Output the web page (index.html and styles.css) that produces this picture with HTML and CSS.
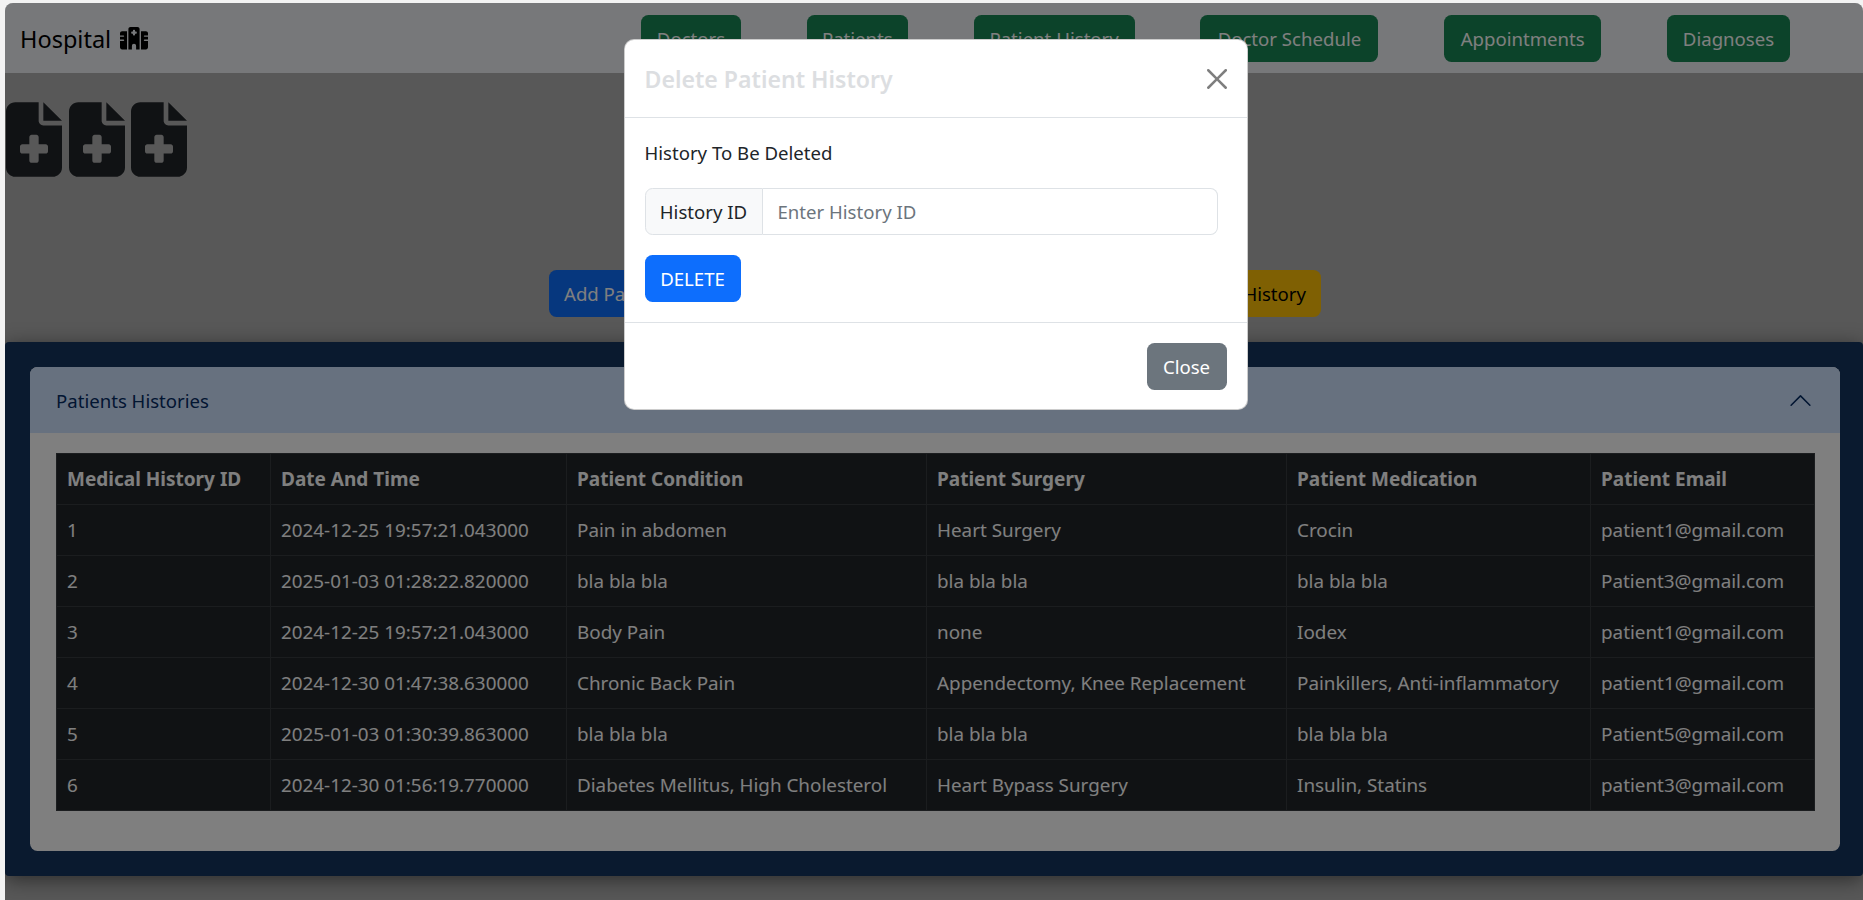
FILE: index.html
```html
<!DOCTYPE html>
<html>
<head>
  <link rel="stylesheet" href="styles.css">
</head>
<body>
  <div class="app">
    <nav class="topbar">
      <a class="brand">Hospital
        <svg class="brand-icon" viewBox="0 0 640 512"><path d="M192 48c0-26.5 21.5-48 48-48H400c26.5 0 48 21.5 48 48V512H368V432c0-26.5-21.5-48-48-48s-48 21.5-48 48v80H192V48zM48 96H160V512H48c-26.5 0-48-21.5-48-48V320H80c8.8 0 16-7.2 16-16s-7.2-16-16-16H0V224H80c8.8 0 16-7.2 16-16s-7.2-16-16-16H0V144c0-26.5 21.5-48 48-48zm544 0c26.5 0 48 21.5 48 48v48H560c-8.8 0-16 7.2-16 16s7.2 16 16 16h80v64H560c-8.8 0-16 7.2-16 16s7.2 16 16 16h80V464c0 26.5-21.5 48-48 48H480V96H592zM312 64c-8.8 0-16 7.2-16 16v24H272c-8.8 0-16 7.2-16 16v16c0 8.8 7.2 16 16 16h24v24c0 8.8 7.2 16 16 16h16c8.8 0 16-7.2 16-16V152h24c8.8 0 16-7.2 16-16V120c0-8.8-7.2-16-16-16H344V80c0-8.8-7.2-16-16-16H312z"/></svg>
      </a>
      <div class="nav-links">
        <button class="btn btn-green btn-doctors">Doctors</button>
        <button class="btn btn-green btn-patients">Patients</button>
        <button class="btn btn-green btn-history">Patient History</button>
        <button class="btn btn-green btn-schedule">Doctor Schedule</button>
        <button class="btn btn-green btn-appointments">Appointments</button>
        <button class="btn btn-green btn-diagnoses">Diagnoses</button>
      </div>
    </nav>

    <div class="file-icons">
      <svg class="file-icon" viewBox="0 0 384 512"><path d="M64 0C28.7 0 0 28.7 0 64V448c0 35.3 28.7 64 64 64H320c35.3 0 64-28.7 64-64V160H256c-17.7 0-32-14.3-32-32V0H64zM256 0V128H384L256 0zM160 240c0-8.8 7.2-16 16-16h32c8.8 0 16 7.2 16 16v48h48c8.8 0 16 7.2 16 16v32c0 8.8-7.2 16-16 16H224v48c0 8.8-7.2 16-16 16H176c-8.8 0-16-7.2-16-16V352H112c-8.8 0-16-7.2-16-16V304c0-8.8 7.2-16 16-16h48V240z"/></svg>
      <svg class="file-icon" viewBox="0 0 384 512"><path d="M64 0C28.7 0 0 28.7 0 64V448c0 35.3 28.7 64 64 64H320c35.3 0 64-28.7 64-64V160H256c-17.7 0-32-14.3-32-32V0H64zM256 0V128H384L256 0zM160 240c0-8.8 7.2-16 16-16h32c8.8 0 16 7.2 16 16v48h48c8.8 0 16 7.2 16 16v32c0 8.8-7.2 16-16 16H224v48c0 8.8-7.2 16-16 16H176c-8.8 0-16-7.2-16-16V352H112c-8.8 0-16-7.2-16-16V304c0-8.8 7.2-16 16-16h48V240z"/></svg>
      <svg class="file-icon" viewBox="0 0 384 512"><path d="M64 0C28.7 0 0 28.7 0 64V448c0 35.3 28.7 64 64 64H320c35.3 0 64-28.7 64-64V160H256c-17.7 0-32-14.3-32-32V0H64zM256 0V128H384L256 0zM160 240c0-8.8 7.2-16 16-16h32c8.8 0 16 7.2 16 16v48h48c8.8 0 16 7.2 16 16v32c0 8.8-7.2 16-16 16H224v48c0 8.8-7.2 16-16 16H176c-8.8 0-16-7.2-16-16V352H112c-8.8 0-16-7.2-16-16V304c0-8.8 7.2-16 16-16h48V240z"/></svg>
    </div>

    <div class="actions">
      <button class="btn btn-blue">Add Patient History</button>
      <button class="btn btn-yellow">Delete Patient History</button>
    </div>

    <section class="panel">
      <div class="accordion">
        <div class="accordion-head">
          <span class="accordion-title">Patients Histories</span>
          <svg class="chevron" viewBox="0 0 16 16"><path d="M1.646 4.646a.5.5 0 0 1 .708 0L8 10.293l5.646-5.647a.5.5 0 0 1 .708.708l-6 6a.5.5 0 0 1-.708 0l-6-6a.5.5 0 0 1 0-.708z"/></svg>
        </div>
        <div class="accordion-body">
          <table class="history-table">
            <thead>
              <tr>
                <th>Medical History ID</th>
                <th>Date And Time</th>
                <th>Patient Condition</th>
                <th>Patient Surgery</th>
                <th>Patient Medication</th>
                <th>Patient Email</th>
              </tr>
            </thead>
            <tbody>
              <tr><td>1</td><td>2024-12-25 19:57:21.043000</td><td>Pain in abdomen</td><td>Heart Surgery</td><td>Crocin</td><td>patient1@gmail.com</td></tr>
              <tr><td>2</td><td>2025-01-03 01:28:22.820000</td><td>bla bla bla</td><td>bla bla bla</td><td>bla bla bla</td><td>Patient3@gmail.com</td></tr>
              <tr><td>3</td><td>2024-12-25 19:57:21.043000</td><td>Body Pain</td><td>none</td><td>Iodex</td><td>patient1@gmail.com</td></tr>
              <tr><td>4</td><td>2024-12-30 01:47:38.630000</td><td>Chronic Back Pain</td><td>Appendectomy, Knee Replacement</td><td>Painkillers, Anti-inflammatory</td><td>patient1@gmail.com</td></tr>
              <tr><td>5</td><td>2025-01-03 01:30:39.863000</td><td>bla bla bla</td><td>bla bla bla</td><td>bla bla bla</td><td>Patient5@gmail.com</td></tr>
              <tr><td>6</td><td>2024-12-30 01:56:19.770000</td><td>Diabetes Mellitus, High Cholesterol</td><td>Heart Bypass Surgery</td><td>Insulin, Statins</td><td>patient3@gmail.com</td></tr>
            </tbody>
          </table>
        </div>
      </div>
    </section>

    <div class="backdrop">
      <div class="modal">
        <div class="modal-head">
          <h5 class="modal-title">Delete Patient History</h5>
          <svg class="modal-close" viewBox="0 0 16 16"><path d="M.293.293a1 1 0 0 1 1.414 0L8 6.586 14.293.293a1 1 0 1 1 1.414 1.414L9.414 8l6.293 6.293a1 1 0 0 1-1.414 1.414L8 9.414l-6.293 6.293a1 1 0 0 1-1.414-1.414L6.586 8 .293 1.707a1 1 0 0 1 0-1.414z"/></svg>
        </div>
        <div class="modal-body">
          <p class="modal-label">History To Be Deleted</p>
          <div class="input-group">
            <span class="input-addon">History ID</span>
            <input class="input-field" type="text" placeholder="Enter History ID">
          </div>
          <button class="btn btn-blue btn-delete">DELETE</button>
        </div>
        <div class="modal-foot">
          <button class="btn btn-grey">Close</button>
        </div>
      </div>
    </div>
  </div>
</body>
</html>
```

FILE: styles.css
```css
/* page */
* {
  box-sizing: border-box;
}

body {
  margin: 0;
  padding: 3px 0 0 5px;
  height: 900px;
  overflow: hidden;
  background-color: #f3f3f3;
  font-family: "Noto Sans", "Open Sans", sans-serif;
  font-size: 18.6px;
  line-height: 30px;
  color: #212529;
}

.app {
  position: relative;
  height: 897px;
  overflow: hidden;
  border-radius: 8px 8px 0 0;
  background-color: #b0b0b0;
}

/* buttons */
.btn {
  height: 47px;
  padding: 0;
  border: none;
  border-radius: 7.5px;
  font-family: inherit;
  font-size: 18.6px;
  line-height: 30px;
  color: #fff;
  text-align: center;
}

.btn-green {
  padding-top: 2px;
  background-color: #198754;
}

.btn-blue {
  background-color: #0d6efd;
}

.btn-yellow {
  background-color: #ffc107;
  color: #000;
}

.btn-grey {
  width: 80px;
  background-color: #6c757d;
}

/* top bar */
.topbar {
  display: flex;
  align-items: center;
  height: 70px;
  padding: 0 73px 0 15px;
  background-color: #eef0f4;
}

.brand {
  display: flex;
  align-items: center;
  gap: 9px;
  padding-top: 1px;
  font-size: 23.5px;
  color: #000;
}

.brand-icon {
  width: 28px;
  height: 22.4px;
}

.nav-links {
  display: flex;
  gap: 65.8px;
  margin-left: auto;
}

.btn-doctors { width: 100px; }
.btn-patients { width: 101px; }
.btn-history { width: 161px; }
.btn-schedule { width: 178px; }
.btn-appointments { width: 157px; }
.btn-diagnoses { width: 123px; }

/* big icons */
.file-icons {
  display: flex;
  gap: 6.5px;
  height: 75px;
  margin: 29px 0 0 1px;
}

.file-icon {
  width: 56px;
  height: 75px;
  fill: #212529;
}

/* buttons under the icons */
.actions {
  display: flex;
  justify-content: space-between;
  width: 772px;
  margin: 93px 0 0 544px;
}

.actions .btn {
  padding: 0 15px;
}

/* blue panel */
.panel {
  margin-top: 25px;
  padding: 25px 23px 25px 25px;
  border-radius: 4px;
  background-color: #14345f;
  box-shadow: 0 4px 20px rgba(0, 0, 0, 0.5);
}

.accordion {
  border-radius: 7.5px;
  overflow: hidden;
  background-color: #fff;
}

.accordion-head {
  display: flex;
  justify-content: space-between;
  align-items: center;
  height: 66px;
  padding: 0 27px 0 26px;
  background-color: #cfe2ff;
  color: #052c65;
}

.accordion-title {
  padding-top: 2px;
}

.chevron {
  width: 25px;
  height: 25px;
  fill: #052c65;
  transform: rotate(180deg);
}

.accordion-body {
  padding: 20px 25px 40px 26px;
}

/* table */
.history-table {
  width: 100%;
  table-layout: fixed;
  border-collapse: collapse;
  background-color: #212529;
  color: #fff;
  font-size: 18.85px;
}

.history-table th,
.history-table td {
  padding: 10px;
  border: 1px solid #373b3e;
  text-align: left;
  white-space: nowrap;
  overflow: hidden;
}

.history-table th {
  font-weight: 700;
  font-size: 19px;
}

.history-table th:nth-child(1) { width: 214px; }
.history-table th:nth-child(2) { width: 296px; }
.history-table th:nth-child(3) { width: 360px; }
.history-table th:nth-child(4) { width: 360px; }
.history-table th:nth-child(5) { width: 304px; }
.history-table th:nth-child(6) { width: 224px; }

/* modal */
.backdrop {
  position: absolute;
  top: 0;
  left: 0;
  width: 100%;
  height: 100%;
  display: flex;
  justify-content: center;
  align-items: flex-start;
  padding: 36px 0 0 3px;
  background-color: rgba(0, 0, 0, 0.5);
}

.modal {
  width: 624px;
  border: 1px solid rgba(0, 0, 0, 0.2);
  border-radius: 10px;
  background-color: #fff;
}

.modal-head {
  display: flex;
  justify-content: space-between;
  align-items: center;
  height: 78px;
  padding: 0 20px;
  border-bottom: 1px solid #dee2e6;
}

.modal-title {
  margin: 0;
  font-size: 23.1px;
  font-weight: 600;
  line-height: 30px;
  color: #dcdee1;
}

.modal-close {
  width: 20px;
  height: 20px;
  fill: #000;
  opacity: 0.5;
}

.modal-body {
  padding: 20px;
}

.modal-label {
  margin: 0 0 20px;
}

.input-group {
  display: flex;
  width: 573px;
  height: 47px;
  margin-bottom: 20px;
}

.input-addon {
  width: 118px;
  border: 1px solid #dee2e6;
  border-radius: 7.5px 0 0 7.5px;
  background-color: #f8f9fa;
  line-height: 45px;
  text-align: center;
}

.input-field {
  flex: 1;
  padding: 0 15px;
  border: 1px solid #dee2e6;
  border-left: none;
  border-radius: 0 7.5px 7.5px 0;
  font-family: inherit;
  font-size: 18.6px;
}

.input-field::placeholder {
  color: #6c757d;
}

.btn-delete {
  display: block;
  width: 96px;
}

.modal-foot {
  display: flex;
  justify-content: flex-end;
  padding: 20px 20px 19px;
  border-top: 1px solid #dee2e6;
}
```
